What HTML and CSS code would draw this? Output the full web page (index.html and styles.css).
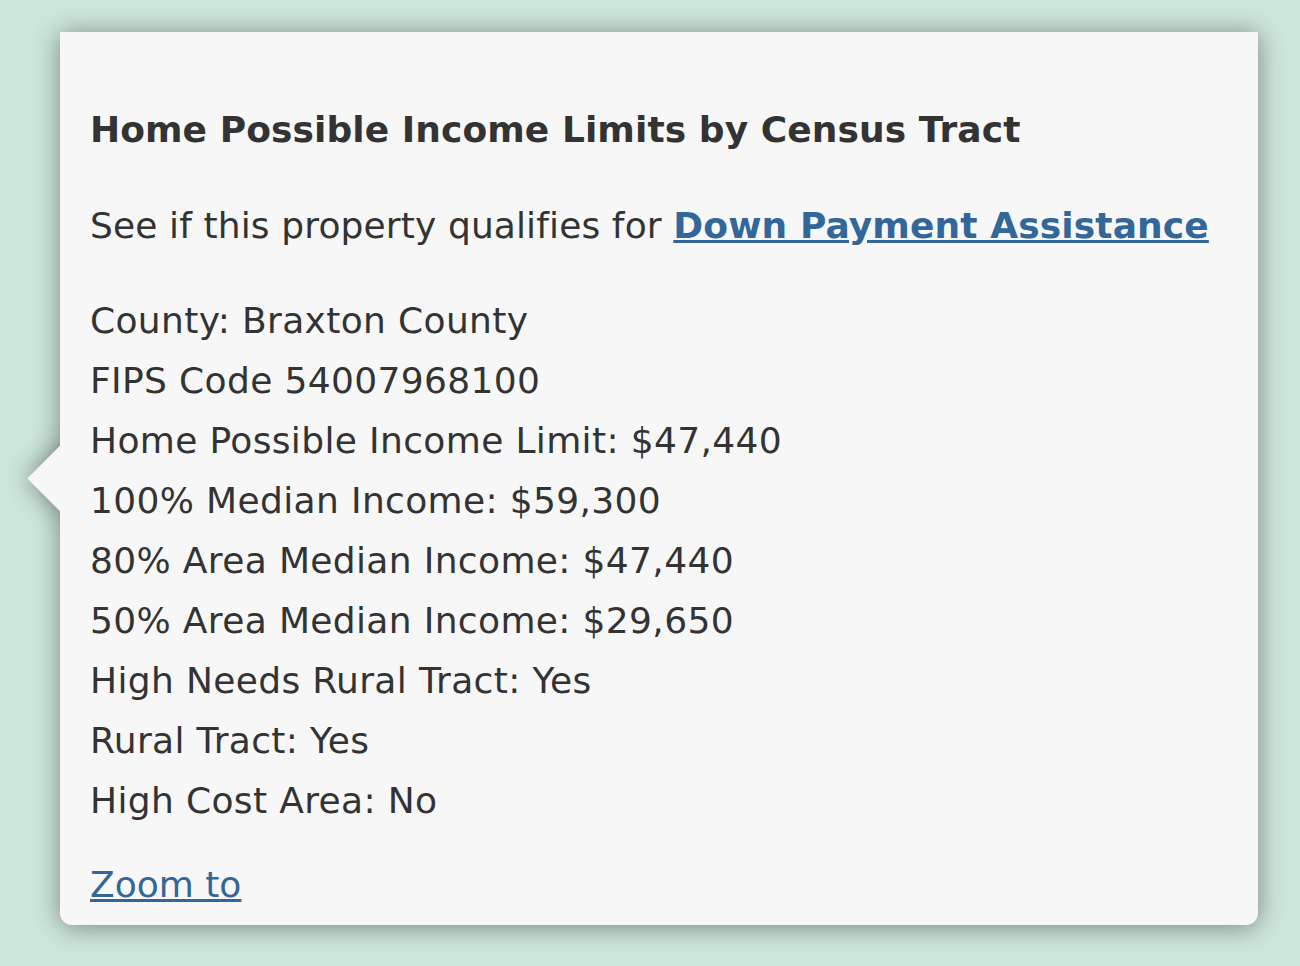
FILE: index.html
```html
<!DOCTYPE html>
<html lang="en">
<head>
<meta charset="utf-8">
<title>Home Possible Income Limits by Census Tract</title>
<link rel="stylesheet" href="styles.css">
</head>
<body>
<div class="popup">
  <div class="pointer"><div class="pointer-sq"></div></div>
  <div class="title">Home Possible Income Limits by Census Tract</div>
  <div class="intro">See if this property qualifies for <a class="dpa" href="#">Down Payment Assistance</a></div>
  <div class="rows">
    <div class="row">County: Braxton County</div>
    <div class="row">FIPS Code 54007968100</div>
    <div class="row">Home Possible Income Limit: $47,440</div>
    <div class="row">100% Median Income: $59,300</div>
    <div class="row">80% Area Median Income: $47,440</div>
    <div class="row">50% Area Median Income: $29,650</div>
    <div class="row">High Needs Rural Tract: Yes</div>
    <div class="row">Rural Tract: Yes</div>
    <div class="row">High Cost Area: No</div>
  </div>
  <div class="actions"><a class="zoom" href="#">Zoom to</a></div>
</div>
</body>
</html>
```
FILE: styles.css
```css
html, body {
  margin: 0;
  padding: 0;
}
body {
  background: #cde6da;
  font-family: "DejaVu Sans", Verdana, sans-serif;
  color: #333333;
  width: 1300px;
  height: 966px;
  overflow: hidden;
}
.popup {
  position: relative;
  margin: 32px 0 0 60px;
  width: 1198px;
  box-sizing: border-box;
  padding: 68px 30px 10px 30px;
  background: #f7f7f7;
  border-radius: 0 0 12px 12px;
  box-shadow: 0 2px 26px rgba(0, 0, 0, 0.42);
  font-size: 36px;
  line-height: 60px;
  font-variant-ligatures: none;
}
.pointer {
  position: absolute;
  left: -60px;
  top: 368px;
  width: 60px;
  height: 160px;
  overflow: hidden;
}
.pointer-sq {
  position: absolute;
  left: 36.5px;
  top: 55px;
  width: 47px;
  height: 47px;
  background: #f7f7f7;
  transform: rotate(45deg);
  box-shadow: 0 0 26px rgba(0, 0, 0, 0.42);
}
.title {
  font-weight: bold;
  letter-spacing: 0.08px;
  margin-bottom: 36px;
}
.intro {
  margin-bottom: 35px;
  letter-spacing: 0.12px;
}
.row {
  letter-spacing: 0.35px;
}
.dpa {
  color: #336699;
  font-weight: bold;
  text-decoration: underline;
}
.zoom {
  color: #336699;
  text-decoration: underline;
}
.actions {
  margin-top: 24px;
}
```
